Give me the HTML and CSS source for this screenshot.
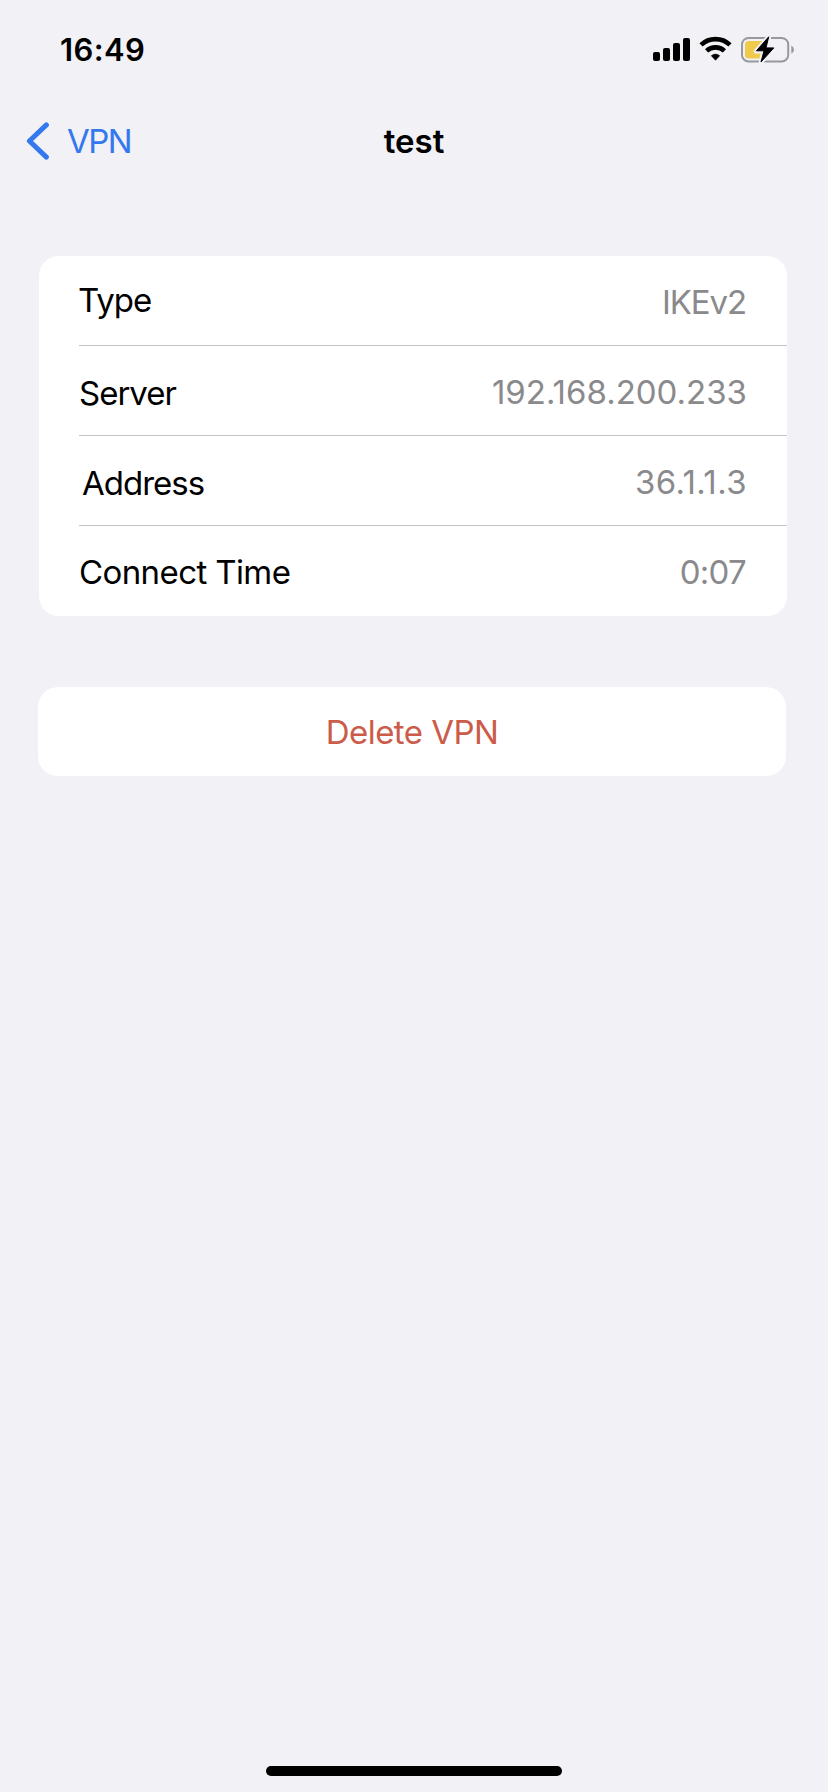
FILE: index.html
```html
<!DOCTYPE html>
<html lang="en">
<head>
<meta charset="utf-8">
<title>test</title>
<link rel="stylesheet" href="styles.css">
</head>
<body>
<div class="screen">
  <header class="status">
    <span class="clock">16:49</span>
    <svg class="indicators" width="144" height="32" viewBox="0 0 144 32">
      <g>
        <rect x="3" y="18" width="7" height="9" rx="2"/>
        <rect x="13" y="14" width="7" height="13" rx="2"/>
        <rect x="23" y="9" width="7" height="18" rx="2"/>
        <rect x="33" y="4" width="7" height="23" rx="2"/>
      </g>
      <g fill="none" stroke="#000" stroke-width="4.6">
        <path d="M51 10.9A21 21 0 0 1 80 10.9"/>
        <path d="M56.6 16.9A13 13 0 0 1 74.4 16.9"/>
      </g>
      <path d="M61.3 21.7Q65.5 18.5 69.7 21.7L65.5 26.2Z" stroke="#000" stroke-width=".6" stroke-linejoin="round"/>
      <rect x="92" y="4" width="46.2" height="23.4" rx="6.5" fill="none" stroke="#98989e" stroke-width="2"/>
      <path d="M141.3 11.6Q144 13 144 15.7T141.3 19.8Z" fill="#98989e"/>
      <rect x="95" y="7" width="24" height="17.4" rx="3.5" fill="#f0cb4b"/>
      <path d="M119 2.5L106 17.2H113.5L110.8 28.5L124.2 13.6H116.4Z" fill="#f2f1f6" stroke="#f2f1f6" stroke-width="4.5" stroke-linejoin="round"/>
      <path d="M118.7 2.8L106.4 16.8H114L111 28L123.8 13.9H116Z" stroke="#000" stroke-linejoin="round"/>
    </svg>
  </header>
  <nav class="navbar">
    <a class="back">
      <svg width="24" height="40" viewBox="0 0 24 40"><path d="M20.4 3.9L3.4 20L20.4 36.1" fill="none" stroke="#3478f0" stroke-width="5" stroke-linecap="round" stroke-linejoin="round"/></svg>
      <span>VPN</span>
    </a>
    <h1 class="title">test</h1>
  </nav>
  <main>
    <section class="card">
      <div class="row row-type"><span class="label">Type</span><span class="value">IKEv2</span></div>
      <div class="row row-server"><span class="label">Server</span><span class="value">192.168.200.233</span></div>
      <div class="row row-address"><span class="label">Address</span><span class="value">36.1.1.3</span></div>
      <div class="row row-time"><span class="label">Connect Time</span><span class="value">0:07</span></div>
    </section>
    <button class="delete">Delete VPN</button>
  </main>
  <footer class="home"><div class="home-bar"></div></footer>
</div>
</body>
</html>
```
FILE: styles.css
```css
* { box-sizing: border-box; }
body { margin: 0; }
.screen {
  width: 828px;
  height: 1792px;
  display: flex;
  flex-direction: column;
  background: #f1f1f6;
  color: #000;
  font-family: Inter, "Liberation Sans", sans-serif;
  font-size: 33px;
  line-height: 40px;
}
.status {
  height: 96px;
  padding: 30px 34px 0 60px;
  display: flex;
  justify-content: space-between;
}
.clock {
  font-size: 31px;
  font-weight: 600;
  letter-spacing: .4px;
}
.indicators { margin-top: 4px; }
.navbar {
  height: 160px;
  padding: 25px 26px 0;
  display: grid;
  grid-template-columns: 1fr auto 1fr;
  align-items: start;
}
.back {
  display: flex;
  gap: 17px;
  color: #3478f0;
  letter-spacing: -1.5px;
}
.title {
  margin: 0;
  font-size: 33px;
  line-height: 40px;
  font-weight: 600;
}
.card {
  width: 748px;
  height: 360px;
  margin-left: 39px;
  padding-left: 40px;
  border-radius: 20px;
  background: #fff;
}
.row {
  height: 90px;
  padding: 26px 40px 0 0;
  display: flex;
  justify-content: space-between;
  border-bottom: 1px solid #c4c4c6;
}
.row:last-child { border-bottom: 0; }
.label { letter-spacing: -1px; }
.value { color: #8a8a8d; }
.row-type { padding-top: 24px; }
.row-type .label { margin-left: -1px; }
.row-type .value { padding-top: 2px; letter-spacing: -1.1px; margin-right: 1px; }
.row-server .label { padding-top: 1px; }
.row-address .label { padding: 1px 0 0 3px; }
.row-address .value { letter-spacing: .4px; }
.row-time .label { letter-spacing: -.6px; }
.row-time .value { letter-spacing: -.7px; margin-right: 1px; }
.delete {
  display: block;
  width: 748px;
  height: 89px;
  margin: 71px 0 0 38px;
  padding: 0;
  border: 0;
  border-radius: 20px;
  background: #fff;
  color: #cb5c49;
  font: inherit;
  letter-spacing: -.55px;
}
.home {
  margin-top: auto;
  padding-bottom: 16px;
  display: flex;
  justify-content: center;
}
.home-bar {
  width: 296px;
  height: 10px;
  border-radius: 5px;
  background: #000;
}
```
